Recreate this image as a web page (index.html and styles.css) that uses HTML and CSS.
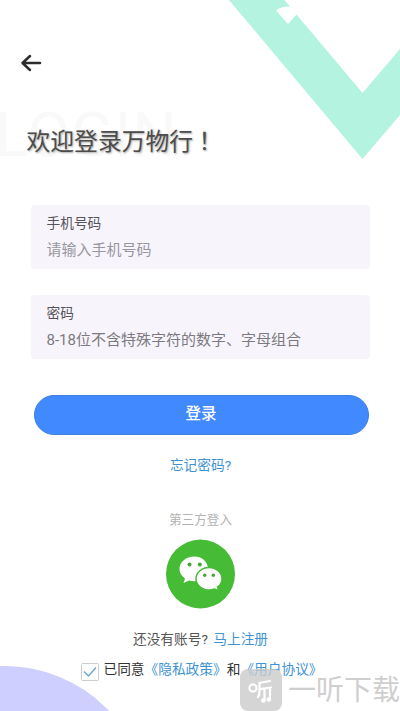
FILE: index.html
```html
<!DOCTYPE html>
<html lang="zh-CN">
<head>
<meta charset="utf-8">
<title>登录</title>
<link rel="stylesheet" href="styles.css">
</head>
<body>
<main class="screen">
  <svg class="chevron" viewBox="0 0 172 160" aria-hidden="true">
    <path d="M1 0H56.500L62 6.500Q54 6 48 10.500L60 24L68.500 14.500L134.500 93L172 49V115L134.500 159Z"/>
  </svg>
  <div class="corner"></div>
  <header class="top">
    <svg class="back" viewBox="0 0 22 18" aria-label="返回"><path d="M10 2L2.500 9L10 16M3 9H20"/></svg>
  </header>
  <div class="heading">
    <span class="ghost" aria-hidden="true">LOGIN</span>
    <h1>欢迎登录万物行<span class="mark">！</span></h1>
  </div>
  <form class="form">
    <label class="field"><span class="name">手机号码</span><span class="hint light">请输入手机号码</span></label>
    <label class="field"><span class="name">密码</span><span class="hint">8-18位不含特殊字符的数字、字母组合</span></label>
    <button class="submit" type="button">登录</button>
  </form>
  <a class="forgot">忘记密码?</a>
  <p class="third">第三方登入</p>
  <svg class="wechat" viewBox="0 0 70 70" aria-label="微信">
    <circle cx="34.500" cy="35" r="34.500" fill="#46bb36"/>
    <path fill="#fff" d="M28.500 17.500C20 17.500 13.500 23 13.500 30C13.500 34 15.500 37 19 39.500L17.500 44L23 41.500Q26 42.500 30 42.300L42 28.500C41 22 35.500 17.500 28.500 17.500Z"/>
    <path fill="#fff" stroke="#46bb36" stroke-width="1.500" d="M43 28.500C36 28.500 30 33.500 30 39.700C30 46 36 51 43 51Q46 51 48.500 50L53 52L51.500 48C54.500 46 56 43 56 39.700C56 33.500 50 28.500 43 28.500Z"/>
    <g fill="#46a43a"><circle cx="23.500" cy="25.500" r="2"/><circle cx="33.800" cy="25.500" r="2"/><circle cx="38.700" cy="36.300" r="1.700"/><circle cx="47.300" cy="36.300" r="1.700"/></g>
  </svg>
  <p class="register">还没有账号? <a>马上注册</a></p>
  <p class="agree"><svg class="check" viewBox="0 0 18 18"><rect x=".5" y=".5" width="17" height="17" rx="1"/><path d="M3 8.500L7.500 13L15 4.500"/></svg><span>已同意<a>《隐私政策》</a>和<a>《用户协议》</a></span></p>
  <div class="watermark">
    <svg viewBox="0 0 42 42"><rect width="42" height="42" rx="8" fill="#c9c9cb" fill-opacity=".78"/><g fill="none" stroke="#fff" stroke-width="2.200" stroke-linecap="round"><circle cx="13" cy="19" r="3.600"/><path d="M30 12L19.500 14V22Q19.500 26 18 28M20 20L31 18.500M24.500 20V31M30 19V30"/></g><g fill="#fff"><circle cx="23.300" cy="31.500" r="2.300"/><circle cx="28.800" cy="30.500" r="2.300"/></g></svg>
    <span>一听下载</span>
  </div>
</main>
</body>
</html>
```
FILE: styles.css
```css
* { box-sizing: border-box; }
body { margin: 0; background: #fff; font-family: Roboto, "Noto Sans CJK SC", sans-serif; }
h1, p { margin: 0; font-weight: 400; }
a { color: #3e93d2; }
.screen {
  position: relative;
  width: 400px;
  height: 711px;
  overflow: hidden;
  display: flex;
  flex-direction: column;
  align-items: center;
  padding-left: 1px;
  white-space: nowrap;
}
.chevron { position: absolute; top: 0; right: 0; width: 172px; height: 160px; fill: #b3f3e0; }
.corner {
  position: absolute;
  left: -138px;
  top: 666px;
  width: 286px;
  height: 286px;
  border-radius: 50%;
  background: #cfcfff;
}
.top { width: 100%; height: 112px; padding: 54px 0 0 19px; }
.back { display: block; width: 22px; height: 18px; fill: none; stroke: #2c2c2c; stroke-width: 2.5; stroke-linecap: round; stroke-linejoin: round; }
.heading { position: relative; width: 100%; height: 93px; padding: 12px 0 0 25.5px; }
.ghost { position: absolute; left: -6px; top: -14px; font-size: 62px; line-height: 73px; color: #f9f9f9; letter-spacing: 1px; }
h1 { position: relative; font-size: 23.8px; line-height: 36px; color: #4c4c4c; text-shadow: 1px 1px 2px #aaa; }
.mark { margin-left: 5.5px; }
.form { width: 339px; display: flex; flex-direction: column; gap: 26px; margin-left: -1px; }
.field { height: 64px; padding: 8px 16px; border-radius: 4px; background: #f7f4fc; display: flex; flex-direction: column; }
.name { font-size: 13.7px; line-height: 20px; color: #55535a; }
.hint { margin-top: 6px; font-size: 15px; line-height: 22px; color: #7c7a80; }
.light { color: #99979e; }
.submit {
  width: 335px;
  height: 40px;
  margin: 10px 0 0 3px;
  padding: 0 0 3px;
  border: 1px solid #3f7fe0;
  border-radius: 20px;
  background: #4189ff;
  color: #fff;
  font: 500 15.5px/34px Roboto, "Noto Sans CJK SC", sans-serif;
}
.forgot { margin-top: 20px; font-size: 13.7px; line-height: 20px; }
.third { margin-top: 36px; font-size: 12.6px; line-height: 18px; color: #b3b3b3; }
.wechat { width: 70px; height: 70px; margin-top: 10px; }
.register { margin-top: 20px; font-size: 13.7px; line-height: 20px; color: #555; }
.register a { margin-left: 2px; }
.agree { display: flex; align-items: center; gap: 4px; height: 20px; margin: 10px 0 0 3px; font-size: 13.7px; line-height: 20px; color: #333; }
.check { width: 18px; height: 18px; margin-top: 6px; fill: none; }
.check rect { stroke: #ccc; fill: #fff; }
.check path { stroke: #6da9cf; stroke-width: 1.5; }
.watermark { position: absolute; left: 240px; top: 669px; display: flex; align-items: flex-start; gap: 6px; color: #cfcfcf; font-size: 28px; line-height: 42px; }
.watermark svg { width: 42px; height: 42px; }
.watermark span { padding-top: 1px; }
```
